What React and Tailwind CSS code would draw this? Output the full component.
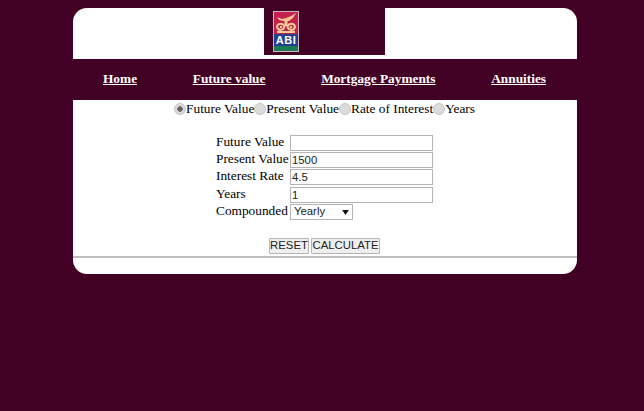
const navLinks = ['Home', 'Future value', 'Mortgage Payments', 'Annuities']
const modes = ['Future Value', 'Present Value', 'Rate of Interest', 'Years']
const fields = [
  { label: 'Future Value', value: '' },
  { label: 'Present Value', value: '1500' },
  { label: 'Interest Rate', value: '4.5' },
  { label: 'Years', value: '1' },
]

function Logo() {
  return (
    <div className="flex h-[41px] w-[26px] flex-col border border-[#c9b6bf] bg-white">
      <svg viewBox="0 0 24 22" className="h-[22px] w-full bg-[#c4204f]">
        <path d="M3 5 L8 7 L12 6 L17 4 L22 1 L19 6 L15 9 L9 9 L5 8 Z" fill="#eec58c" />
        <path d="M3 15 C3 11 9 11 10.5 14 C10 19 4 19 3 15 Z M13.5 14 C15 11 21 11 21 15 C20 19 14 19 13.5 14 Z" fill="#c4204f" stroke="#f3cf96" strokeWidth="2" />
        <path d="M10.5 9 H13.5 V14 H10.5 Z M3 19 H21 V21 H3 Z" fill="#f3cf96" />
        <circle cx="7" cy="15" r="1.2" fill="#f3cf96" />
        <circle cx="17" cy="15" r="1.2" fill="#f3cf96" />
      </svg>
      <div className="flex h-[12px] items-center justify-center bg-[#24408f] font-['Liberation_Sans',sans-serif] text-[11px] leading-none font-bold tracking-[0.5px] text-white">
        ABI
      </div>
      <div className="h-[5px] bg-[#1c7a52]" />
    </div>
  )
}

function App() {
  return (
    <div className="min-h-[411px] bg-[#420024] pt-2 font-['Liberation_Serif',serif] text-[13.33px] text-black">
      <div className="ml-[73px] w-[504px] overflow-hidden rounded-[14px] bg-white">
        <div className="flex h-[51px] justify-center">
          <div className="ml-[-1px] h-[47px] w-[121px] bg-[#420024] pt-[3px] pl-[9px]">
            <Logo />
          </div>
        </div>

        <nav className="flex h-[41px] items-center justify-between bg-[#420024] pr-[31px] pl-[30px]">
          {navLinks.map((link) => (
            <a key={link} href="#" className="pb-[1px] text-[13.33px] font-bold text-white underline">
              {link}
            </a>
          ))}
        </nav>

        <div className="flex h-[174px] flex-col">
          <div className="flex h-[18px] items-center justify-center pr-[1px]">
            {modes.map((mode, i) => (
              <label key={mode} className="flex items-center">
                <input
                  type="radio"
                  name="mode"
                  defaultChecked={i === 0}
                  className="h-[12px] w-[12px] appearance-none rounded-full border border-[#c4c4c4] bg-[#dcdcdc] checked:bg-[radial-gradient(circle,#666_0,#666_2.5px,#dcdcdc_3px)]"
                />
                <span>{mode}</span>
              </label>
            ))}
          </div>

          <div className="mt-[17px] ml-[143px] flex flex-col">
            {fields.map((field, i) => (
              <div key={field.label} className={i === 3 ? 'mt-[1px] flex h-[17px] items-start' : 'flex h-[17px] items-start'}>
                <span className="w-[74px] shrink-0 leading-[14px]">{field.label}</span>
                <input
                  readOnly
                  value={field.value}
                  className="h-[16px] w-[143px] border border-[#b5b5b5] bg-white px-[1px] font-['Liberation_Sans',sans-serif] text-[11.33px] text-[#222]"
                />
              </div>
            ))}
            <div className="flex h-[17px] items-start">
              <span className="w-[74px] shrink-0 leading-[14px]">Compounded</span>
              <div className="relative h-[16px] w-[63px]">
                <select className="block h-full w-full appearance-none border border-[#b5b5b5] bg-white px-[3px] font-['Liberation_Sans',sans-serif] text-[11.33px] leading-none text-[#222]">
                  <option>Yearly</option>
                </select>
                <svg viewBox="0 0 8 6" className="pointer-events-none absolute top-[6px] right-[4px] h-[5px] w-[7px]">
                  <path d="M0 0 H8 L4 6 Z" fill="#111" />
                </svg>
              </div>
            </div>
          </div>

          <div className="mt-[17px] flex justify-center gap-[2px] pr-[1px]">
            <button className="h-[16px] w-[40px] rounded-[1px] border border-[#b5b5b5] bg-[#efefef] font-['Liberation_Sans',sans-serif] text-[11.33px] leading-none text-[#222]">
              RESET
            </button>
            <button className="h-[16px] w-[69px] rounded-[1px] border border-[#b5b5b5] bg-[#efefef] font-['Liberation_Sans',sans-serif] text-[11.33px] leading-none text-[#222]">
              CALCULATE
            </button>
          </div>

          <div className="mt-[2px] h-[2px] bg-[#bdbdbd]" />
        </div>
      </div>
    </div>
  )
}

export default App
